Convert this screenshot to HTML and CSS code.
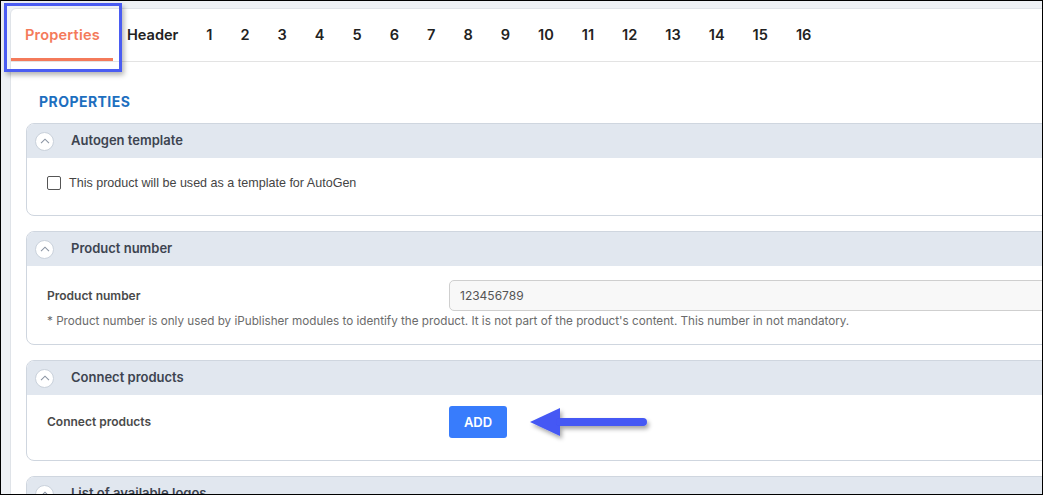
FILE: index.html
```html
<!DOCTYPE html>
<html>
<head>
<meta charset="utf-8">
<link rel="stylesheet" href="styles.css">
</head>
<body>
<div class="frame">
  <div class="panel">
    <nav class="tabs">
      <span class="tab active">Properties</span>
      <span class="tab">Header</span>
      <span class="tab">1</span>
      <span class="tab">2</span>
      <span class="tab">3</span>
      <span class="tab">4</span>
      <span class="tab">5</span>
      <span class="tab">6</span>
      <span class="tab">7</span>
      <span class="tab">8</span>
      <span class="tab">9</span>
      <span class="tab">10</span>
      <span class="tab">11</span>
      <span class="tab">12</span>
      <span class="tab">13</span>
      <span class="tab">14</span>
      <span class="tab">15</span>
      <span class="tab">16</span>
    </nav>
    <div class="content">
      <h2 class="heading">PROPERTIES</h2>

      <section class="card">
        <div class="card-head">
          <span class="toggle"><svg width="10" height="6" viewBox="0 0 10 6"><path d="M1 5.2 L5 1.2 L9 5.2" fill="none" stroke="#8a94a3" stroke-width="1.1"/></svg></span>
          <span class="card-title">Autogen template</span>
        </div>
        <div class="card-body body-autogen">
          <label class="check-row"><span class="checkbox"></span><span class="check-text">This product will be used as a template for AutoGen</span></label>
        </div>
      </section>

      <section class="card">
        <div class="card-head">
          <span class="toggle"><svg width="10" height="6" viewBox="0 0 10 6"><path d="M1 5.2 L5 1.2 L9 5.2" fill="none" stroke="#8a94a3" stroke-width="1.1"/></svg></span>
          <span class="card-title">Product number</span>
        </div>
        <div class="card-body body-number">
          <div class="field-row">
            <span class="field-label">Product number</span>
            <div class="input">123456789</div>
          </div>
          <p class="note">* Product number is only used by iPublisher modules to identify the product. It is not part of the product's content. This number in not mandatory.</p>
        </div>
      </section>

      <section class="card">
        <div class="card-head">
          <span class="toggle"><svg width="10" height="6" viewBox="0 0 10 6"><path d="M1 5.2 L5 1.2 L9 5.2" fill="none" stroke="#8a94a3" stroke-width="1.1"/></svg></span>
          <span class="card-title">Connect products</span>
        </div>
        <div class="card-body body-connect">
          <div class="field-row">
            <span class="field-label">Connect products</span>
            <button class="btn-add">ADD</button>
          </div>
        </div>
      </section>

      <section class="card">
        <div class="card-head">
          <span class="toggle"><svg width="10" height="6" viewBox="0 0 10 6"><path d="M1 5.2 L5 1.2 L9 5.2" fill="none" stroke="#8a94a3" stroke-width="1.1"/></svg></span>
          <span class="card-title">List of available logos</span>
        </div>
      </section>
    </div>
  </div>

  <div class="highlight"></div>
  <svg class="arrow" width="140" height="50" viewBox="0 0 140 50">
    <defs>
      <filter id="sh" x="-20%" y="-40%" width="150%" height="200%">
        <feDropShadow dx="2" dy="3" stdDeviation="2" flood-color="#000" flood-opacity="0.35"/>
      </filter>
    </defs>
    <g filter="url(#sh)" fill="#4458f4">
      <path d="M4 21 L34 7 L34 35 Z"/>
      <rect x="30" y="17" width="91" height="8" rx="4"/>
    </g>
  </svg>
</div>
</body>
</html>
```

FILE: styles.css
```css
* { box-sizing: border-box; }

html, body {
  margin: 0;
  padding: 0;
}

body {
  font-family: Inter, "Noto Sans", sans-serif;
  background: #ffffff;
}

.frame {
  position: relative;
  width: 1043px;
  height: 495px;
  border: 1px solid #000;
  background: #eef1f5;
  overflow: hidden;
  padding: 7px 0 0 9px;
}

.panel {
  width: 1200px;
  height: 600px;
  background: #fff;
  border: 1px solid #dfe3e8;
  border-radius: 6px 0 0 0;
}

.tabs {
  display: flex;
  height: 53px;
  border-bottom: 1px solid #e3e3e3;
}

.tab {
  display: flex;
  align-items: center;
  padding: 2px 14px 0 14px;
  font-size: 14.55px;
  font-weight: 600;
  color: #222;
  border-bottom: 3px solid transparent;
}

.tab.active {
  color: #f47a5a;
  border-bottom-color: #f47a5a;
  padding-right: 13px;
  letter-spacing: 0.2px;
}

.content {
  padding: 0 0 0 15px;
}

.heading {
  margin: 0 0 0 13px;
  padding: 31px 0 13px 0;
  font-size: 14px;
  letter-spacing: 0.45px;
  font-weight: 700;
  color: #1d6fbf;
  line-height: 17px;
}

.card {
  border: 1px solid #cfd6df;
  border-radius: 8px;
  margin-bottom: 15px;
  overflow: hidden;
}

.card-head {
  display: flex;
  align-items: center;
  height: 34px;
  background: #e1e7ef;
  padding-left: 8px;
  padding-bottom: 2px;
}

.toggle {
  width: 19px;
  height: 19px;
  border-radius: 50%;
  background: #fff;
  border: 1px solid #c9d1db;
  display: flex;
  align-items: center;
  justify-content: center;
  margin-right: 17px;
  margin-top: 3px;
}

.toggle svg { display: block; margin-top: -1px; }

.card-title {
  font-size: 13px;
  font-weight: 600;
  color: #3d4450;
}

.card-body {
  padding-left: 20px;
}

.body-autogen {
  height: 57px;
  padding-top: 18px;
}

.check-row {
  display: flex;
  align-items: center;
}

.checkbox {
  width: 14px;
  height: 14px;
  border: 1px solid #555;
  border-radius: 2px;
  margin-right: 8px;
  background: #fff;
}

.check-text {
  font-family: "Liberation Sans", Arial, sans-serif;
  font-size: 12.55px;
  color: #444;
}

.body-number {
  height: 78px;
  padding-top: 14px;
}

.field-row {
  display: flex;
  align-items: center;
}

.field-label {
  width: 402px;
  font-size: 12px;
  font-weight: 600;
  color: #4a4a4a;
  margin-top: -1px;
}

.input {
  flex: 1;
  height: 31px;
  border: 1px solid #cfcfcf;
  border-radius: 5px;
  background: #f8f8f8;
  font-size: 12px;
  color: #555;
  padding: 0 10px;
  display: flex;
  align-items: center;
}

.note {
  margin: 3px 0 0 0;
  font-size: 11.7px;
  color: #6b6b6b;
  line-height: 15px;
}

.body-connect {
  height: 65px;
  padding-top: 11px;
}

.btn-add {
  width: 58px;
  height: 32px;
  border: none;
  border-radius: 3px;
  background: #387cfc;
  color: #fff;
  font-family: Inter, sans-serif;
  font-size: 13px;
  font-weight: 600;
  padding: 0;
}

.highlight {
  position: absolute;
  left: 3px;
  top: 2px;
  width: 118px;
  height: 69px;
  border: 3px solid #4a5cf2;
  box-shadow: 2px 3px 5px rgba(0, 0, 0, 0.3);
}

.arrow {
  position: absolute;
  left: 525px;
  top: 400px;
}
```
